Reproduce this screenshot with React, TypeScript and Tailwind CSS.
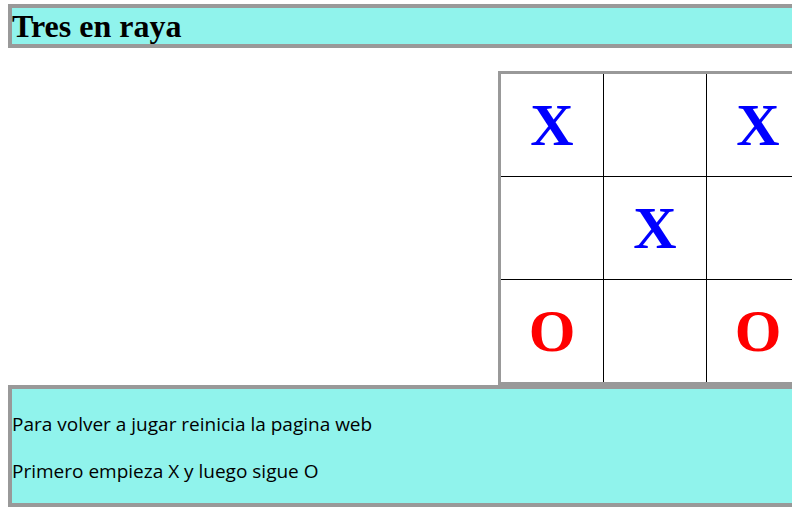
import React from 'react';

const board = ['X', '', 'X', '', 'X', '', 'O', '', 'O'];

const App = () => {
  return (
    <div className="w-[792px] h-[512px] overflow-hidden bg-white">
      <div className="ml-2 pt-1 w-[830px]">
        {/* Cabecera */}
        <h1 className="m-0 border-4 border-[#999999] bg-[#90f3ec] text-[32px] leading-[36px] font-bold text-black font-['Liberation_Serif',serif]">
          Tres en raya
        </h1>

        {/* Tablero */}
        <div className="mt-[23px] ml-[490px] w-fit grid grid-cols-[102px_102px_102px] gap-px bg-black border-[3px] border-[#999999]">
          {board.map((cell, i) => (
            <div
              key={i}
              className={`h-[102px] bg-white flex items-center justify-center text-[60px] font-bold font-['Liberation_Serif',serif] ${
                cell === 'X' ? 'text-[#0000ff]' : 'text-[#ff0000]'
              }`}
            >
              {cell}
            </div>
          ))}
        </div>

        {/* Pie */}
        <div className="border-4 border-[#999999] bg-[#90f3ec] text-black text-[19px] leading-[27px] font-['Open_Sans',sans-serif]">
          <p className="mt-[22px] mb-5">Para volver a jugar reinicia la pagina web</p>
          <p className="mt-5 mb-[18px]">Primero empieza X y luego sigue O</p>
        </div>
      </div>
    </div>
  );
};

export default App;
